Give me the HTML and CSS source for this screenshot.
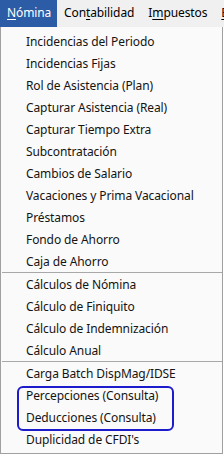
FILE: index.html
```html
<!DOCTYPE html>
<html lang="es">
<head>
<meta charset="utf-8">
<link rel="stylesheet" href="styles.css">
</head>
<body>
<div class="screen">
  <div class="menubar">
    <div class="top active"><u>N</u>ómina</div>
    <div class="top">Con<u>t</u>abilidad</div>
    <div class="top">I<u>m</u>puestos</div>
    <div class="top"><u>E</u>mpresa</div>
  </div>
  <div class="dropdown">
    <div class="item">Incidencias del Periodo</div>
    <div class="item">Incidencias Fijas</div>
    <div class="item">Rol de Asistencia (Plan)</div>
    <div class="item">Capturar Asistencia (Real)</div>
    <div class="item">Capturar Tiempo Extra</div>
    <div class="item">Subcontratación</div>
    <div class="item">Cambios de Salario</div>
    <div class="item">Vacaciones y Prima Vacacional</div>
    <div class="item">Préstamos</div>
    <div class="item">Fondo de Ahorro</div>
    <div class="item">Caja de Ahorro</div>
    <div class="sep"></div>
    <div class="item">Cálculos de Nómina</div>
    <div class="item">Cálculo de Finiquito</div>
    <div class="item">Cálculo de Indemnización</div>
    <div class="item">Cálculo Anual</div>
    <div class="sep"></div>
    <div class="item">Carga Batch DispMag/IDSE</div>
    <div class="item">Percepciones (Consulta)</div>
    <div class="item">Deducciones (Consulta)</div>
    <div class="item">Duplicidad de CFDI's</div>
    <div class="highlight"></div>
  </div>
</div>
</body>
</html>
```
FILE: styles.css
```css
* { box-sizing: border-box; }
html, body { margin: 0; padding: 0; background: #ffffff; }
body {
  font-family: "Noto Sans", "Open Sans", sans-serif;
  font-size: 12px;
  color: #111111;
}
.screen { width: 224px; height: 454px; overflow: hidden; position: relative; }
.menubar {
  display: flex;
  height: 27px;
  background: #f0f0f0;
  white-space: nowrap;
  overflow: hidden;
}
.top {
  height: 27px;
  line-height: 26px;
  padding: 0 7px;
  color: #000000;
  flex-shrink: 0;
  letter-spacing: -0.1px;
}
.top.active {
  background: #2d5ca6;
  color: #ffffff;
  width: 57px;
  padding: 0 0 0 7px;
}
.top u { text-decoration-thickness: 1px; text-underline-offset: 2px; }
.dropdown {
  position: relative;
  width: 223px;
  height: 427px;
  background: #fafafa;
  border: 1px solid #a0a0a0;
  border-top: none;
  padding-top: 4px;
}
.item {
  height: 22px;
  line-height: 22px;
  padding-left: 25px;
  white-space: nowrap;
  color: #141414;
  letter-spacing: -0.1px;
}
.sep {
  height: 2px;
  margin: -1px 0 0 1px;
  border-top: 1px solid #a8a8a8;
}
.highlight {
  position: absolute;
  left: 16px;
  top: 359px;
  width: 157px;
  height: 45px;
  border: 2px solid #1c1ccc;
  border-radius: 6px;
}
```
